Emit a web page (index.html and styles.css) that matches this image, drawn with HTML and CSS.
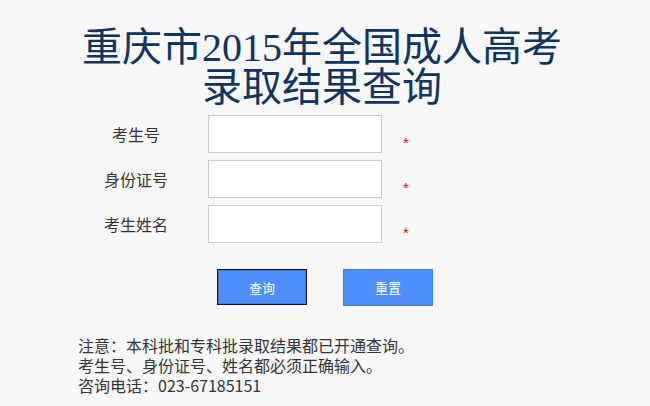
FILE: index.html
```html
<!DOCTYPE html>
<html lang="zh-CN">
  <head>
    <meta charset="UTF-8" />
    <title>重庆市2015年全国成人高考录取结果查询</title>
    <link rel="stylesheet" href="styles.css">
  </head>
  <body>
    <div class="page">
      <h1 class="title">重庆市2015年全国成人高考<br>录取结果查询</h1>

      <form class="query-form" action="#" method="POST">
        <div class="form-grid">
          <label class="form-label" for="ksh">考生号</label>
          <input class="form-input" id="ksh" type="text" name="ksh">
          <span class="required">*</span>

          <label class="form-label" for="sfzh">身份证号</label>
          <input class="form-input" id="sfzh" type="text" name="sfzh">
          <span class="required">*</span>

          <label class="form-label" for="xm">考生姓名</label>
          <input class="form-input" id="xm" type="text" name="xm">
          <span class="required">*</span>
        </div>

        <!-- Query and reset buttons -->
        <div class="form-buttons">
          <button type="submit" class="btn btn-active">查询</button>
          <button type="reset" class="btn">重置</button>
        </div>
      </form>

      <div class="notes">
        <p>注意：本科批和专科批录取结果都已开通查询。</p>
        <p>考生号、身份证号、姓名都必须正确输入。</p>
        <p>咨询电话：023-67185151</p>
      </div>
    </div>
  </body>
</html>
```

FILE: styles.css
```css
html {
  height: 100%;
}
body {
  margin: 0;
  padding: 0;
  background: #f7f7f7;
  font-family: "Noto Sans CJK SC", "Noto Sans", sans-serif;
  color: #333;
}

.page {
  width: 650px;
}

/* Page title */
.title {
  margin: 0;
  padding: 28px 6px 0 0;
  font-family: "Liberation Serif", "Noto Sans CJK SC", serif;
  font-size: 40px;
  font-weight: normal;
  line-height: 40px;
  text-align: center;
  color: #0e3461;
}

/* Form rows */
.query-form {
  margin-top: 7px;
}

.form-grid {
  display: grid;
  grid-template-columns: 112px 174px 24px;
  grid-auto-rows: 38px;
  column-gap: 16px;
  row-gap: 7px;
  margin-left: 80px;
}

.form-label {
  align-self: center;
  text-align: center;
  font-size: 16px;
  color: #333;
}

.form-input {
  box-sizing: border-box;
  width: 174px;
  height: 38px;
  margin: 0;
  padding: 0 6px;
  border: 1px solid #c8c8c8;
  background: #fff;
  outline: none;
}

.required {
  display: flex;
  align-items: center;
  padding: 16px 0 0 5px;
  font-family: "Liberation Sans", sans-serif;
  font-size: 15px;
  color: #f00;
}

/* Buttons */
.form-buttons {
  display: flex;
  justify-content: center;
  gap: 36px;
  margin-top: 26px;
}

.btn {
  box-sizing: border-box;
  width: 90px;
  height: 37px;
  padding: 0;
  border: 1px solid #3b7de8;
  background: #4d8ffd;
  color: #fff;
  font-family: "Noto Sans CJK SC", sans-serif;
  font-size: 13px;
  cursor: pointer;
}

.btn-active {
  height: 36px;
  border-color: #111;
  box-shadow: inset 0 0 0 1px #3b7de8;
}

/* Notes */
.notes {
  margin-top: 29px;
  padding-left: 78px;
  font-size: 16px;
  line-height: 20px;
  color: #333;
}

.notes p {
  margin: 0;
}
```
